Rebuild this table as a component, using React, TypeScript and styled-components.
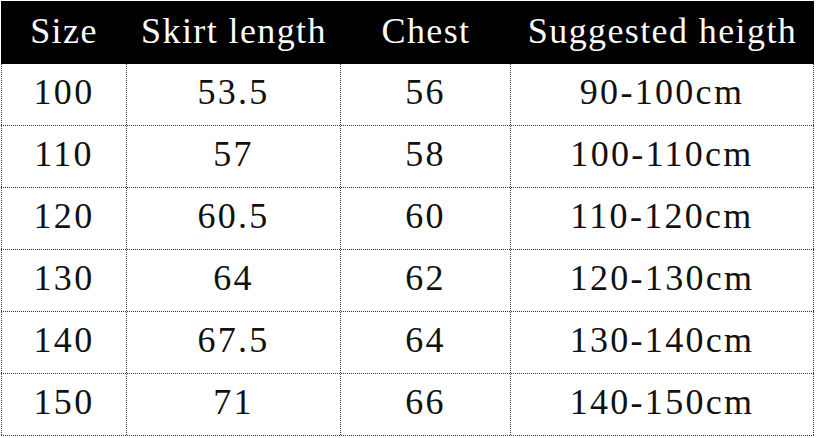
import styled, { createGlobalStyle } from 'styled-components'

const Global = createGlobalStyle`
  body {
    margin: 0;
    background: #fff;
  }
`

const header = ['Size', 'Skirt length', 'Chest', 'Suggested heigth']

const rows: string[][] = [
  ['100', '53.5', '56', '90-100cm'],
  ['110', '57', '58', '100-110cm'],
  ['120', '60.5', '60', '110-120cm'],
  ['130', '64', '62', '120-130cm'],
  ['140', '67.5', '64', '130-140cm'],
  ['150', '71', '66', '140-150cm'],
]

const App = () => {
  return (
    <Page>
      <Global />
      <Table>
        <HeadRow>
          {header.map((h) => (
            <HeadCell key={h}>{h}</HeadCell>
          ))}
        </HeadRow>
        {rows.map((r) => (
          <Row key={r[0]}>
            {r.map((c, i) => (
              <Cell key={i} first={i === 0}>{c}</Cell>
            ))}
          </Row>
        ))}
      </Table>
    </Page>
  )
}

export default App

const Page = styled.div`
  width: 816px;
  height: 438px;
  padding: 1px 0 0 1px;
  box-sizing: border-box;
  background: #fff;
`
const Table = styled.div`
  width: 813px;
  display: flex;
  flex-direction: column;
  font-family: 'Liberation Serif', 'Times New Roman', serif;
`
const HeadRow = styled.div`
  display: grid;
  grid-template-columns: 126px 214px 170px 303px;
  height: 63px;
  background: #000;
`
const HeadCell = styled.div`
  display: flex;
  align-items: center;
  justify-content: center;
  color: #fbfbfb;
  font-size: 36px;
  letter-spacing: 1.4px;
  padding-bottom: 4px;
`
const Row = styled.div`
  display: grid;
  grid-template-columns: 126px 214px 170px 303px;
  height: 62px;
  border-bottom: 1px dotted #333;
  box-sizing: border-box;
`
const Cell = styled.div<{ first: boolean }>`
  display: flex;
  align-items: center;
  justify-content: center;
  border-right: 1px dotted #333;
  border-left: ${({ first }) => (first ? '1px dotted #333' : 'none')};
  color: #111;
  font-size: 36px;
  letter-spacing: 2.3px;
  padding-bottom: 6px;
  box-sizing: border-box;
`
